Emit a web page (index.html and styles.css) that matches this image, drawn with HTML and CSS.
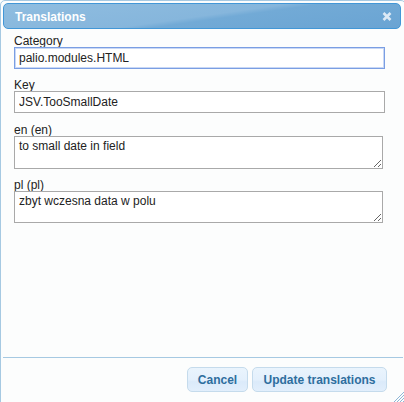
FILE: index.html
```html
<!DOCTYPE html>
<html>
<head>
<meta charset="utf-8">
<link rel="stylesheet" href="styles.css">
</head>
<body>
<div class="dialog">
  <div class="titlebar">
    <span class="title">Translations</span>
    <span class="close" aria-label="close">
      <svg width="10" height="9" viewBox="0 0 10 9"><path d="M1.5 1 L8.5 8 M8.5 1 L1.5 8" stroke="#dce9f5" stroke-width="2.6" stroke-linecap="butt"/></svg>
    </span>
  </div>
  <div class="content">
    <div class="field">
      <label class="lbl">Category</label>
      <input class="inp focus" type="text" value="palio.modules.HTML">
    </div>
    <div class="field gap9">
      <label class="lbl">Key</label>
      <input class="inp" type="text" value="JSV.TooSmallDate">
    </div>
    <div class="field">
      <label class="lbl">en (en)</label>
      <textarea class="ta">to small date in field</textarea>
    </div>
    <div class="field">
      <label class="lbl">pl (pl)</label>
      <textarea class="ta ta2">zbyt wczesna data w polu</textarea>
    </div>
  </div>
  <div class="buttonpane">
    <button class="btn">Cancel</button>
    <button class="btn">Update translations</button>
  </div>
  <svg class="grip" width="11" height="11" viewBox="0 0 11 11">
    <path d="M11 1 L1 11 M11 4 L4 11 M11 7 L7 11 M11 10 L10 11" stroke="#8fb6d6" stroke-width="1"/>
  </svg>
</div>
</body>
</html>
```
FILE: styles.css
```css
html, body {
  margin: 0;
  padding: 0;
  background: #fcfdfd;
  overflow: hidden;
}
body {
  width: 404px;
  height: 402px;
  font-family: "Liberation Sans", Arial, sans-serif;
  font-size: 12px;
  color: #222;
}
.dialog {
  position: relative;
  box-sizing: border-box;
  width: 406px;
  height: 404px;
  border: 1px solid #a6c9e2;
  border-radius: 5px 5px 0 0;
  padding: 2px;
  background: #fcfdfd;
  display: flex;
  flex-direction: column;
}
.titlebar {
  box-sizing: border-box;
  height: 26px;
  width: 398px;
  border: 1px solid #4297d7;
  border-radius: 5px;
  background: linear-gradient(172deg, #8fbde0 0%, #86b6dc 50%, #72aad6 56%, #6aa4d3 100%);
  display: flex;
  align-items: center;
  justify-content: space-between;
  padding: 0 8px 0 11px;
}
.title {
  color: #fff;
  font-weight: bold;
  font-size: 12px;
  line-height: 14px;
  margin-top: 1px;
}
.close {
  display: flex;
  width: 10px;
  height: 9px;
}
.content {
  flex: 1;
  padding: 4px 0 0 11px;
  display: flex;
  flex-direction: column;
}
.field {
  display: flex;
  flex-direction: column;
  margin-bottom: 8px;
}
.field.gap9 {
  margin-bottom: 9px;
}
.lbl {
  display: block;
  line-height: 16px;
  height: 14px;
  color: #222;
}
.inp {
  box-sizing: border-box;
  width: 371px;
  height: 22px;
  margin: 0;
  padding: 0 4px;
  border: 1px solid #a9a9a9;
  font-family: "Liberation Sans", Arial, sans-serif;
  font-size: 12px;
  color: #222;
  background: #fff;
  outline: none;
}
.inp.focus {
  border-color: #7a9ee3;
  box-shadow: inset 0 0 0 1px #c9d8f5;
}
.ta {
  box-sizing: border-box;
  width: 369px;
  height: 33px;
  margin: 0;
  padding: 2px 4px;
  border: 1px solid #a9a9a9;
  font-family: "Liberation Sans", Arial, sans-serif;
  font-size: 12px;
  line-height: 14px;
  color: #222;
  background: #fff;
  outline: none;
}
.ta2 {
  height: 32px;
}
.buttonpane {
  border-top: 1px solid #a6c9e2;
  height: 44px;
  box-sizing: border-box;
  padding: 9px 16px 0 0;
  display: flex;
  justify-content: flex-end;
  align-items: flex-start;
  gap: 4px;
}
.btn {
  box-sizing: border-box;
  height: 25px;
  padding: 0;
  border: 1px solid #c5dbec;
  border-radius: 5px;
  background: linear-gradient(#eaf4fd 0%, #e4f0fc 50%, #dbeafa 60%, #e2effc 100%);
  color: #2e6e9e;
  font-family: "Liberation Sans", Arial, sans-serif;
  font-weight: bold;
  font-size: 12px;
  line-height: 14px;
}
.btn:first-child {
  width: 61px;
}
.btn:last-child {
  width: 135px;
}
.grip {
  position: absolute;
  right: 1px;
  bottom: 1px;
}
```
